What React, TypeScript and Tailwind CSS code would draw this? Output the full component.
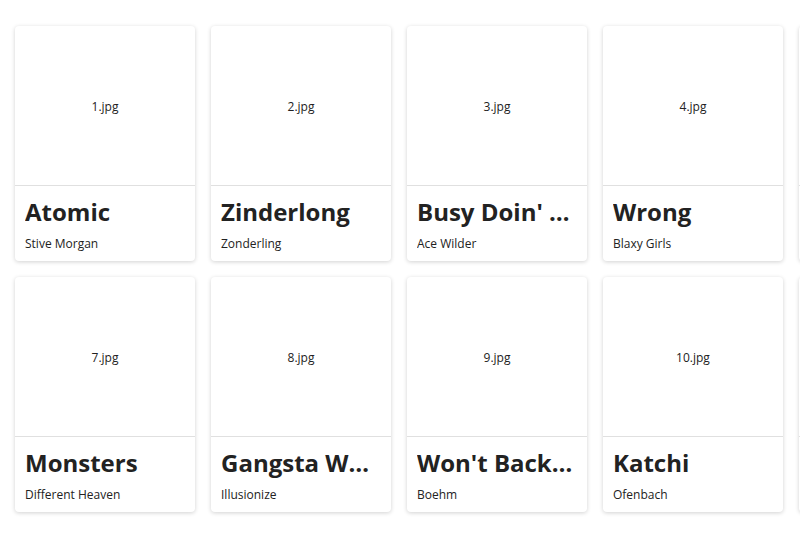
const songs = [
  { img: "1.jpg", title: "Atomic", artist: "Stive Morgan" },
  { img: "2.jpg", title: "Zinderlong", artist: "Zonderling" },
  { img: "3.jpg", title: "Busy Doin' Nothin'", artist: "Ace Wilder" },
  { img: "4.jpg", title: "Wrong", artist: "Blaxy Girls" },
  { img: "5.jpg", title: "Alone", artist: "Marshmello" },
  { img: "6.jpg", title: "Faded", artist: "Alan Walker" },
  { img: "7.jpg", title: "Monsters", artist: "Different Heaven" },
  { img: "8.jpg", title: "Gangsta Walk", artist: "Illusionize" },
  { img: "9.jpg", title: "Won't Back Down", artist: "Boehm" },
  { img: "10.jpg", title: "Katchi", artist: "Ofenbach" },
  { img: "11.jpg", title: "Lullaby", artist: "R3HAB" },
  { img: "12.jpg", title: "Sunrise", artist: "Unknown" },
];

function SongCard({ img, title, artist }: { img: string; title: string; artist: string }) {
  return (
    <div className="w-[180px] overflow-hidden rounded bg-white shadow-[0_1px_4px_rgba(0,0,0,0.18)]">
      <div className="flex h-[160px] items-center justify-center border-b border-[#e0e0e0] pt-[2px] text-[12px] text-[#222]">
        {img}
      </div>
      <div className="px-[10px] pt-[10px] pb-[9px]">
        <h2 className="truncate text-[24px] leading-[32px] font-bold text-[#222]">{title}</h2>
        <p className="mt-[8px] truncate text-[12px] leading-[16px] text-[#222]">{artist}</p>
      </div>
    </div>
  );
}

export default function App() {
  return (
    <div className="min-h-screen bg-white font-['Open_Sans',sans-serif]">
      <div className="grid w-max grid-cols-[repeat(6,180px)] gap-4 px-[15px] py-[26px]">
        {songs.map((s) => (
          <SongCard key={s.img} {...s} />
        ))}
      </div>
    </div>
  );
}
